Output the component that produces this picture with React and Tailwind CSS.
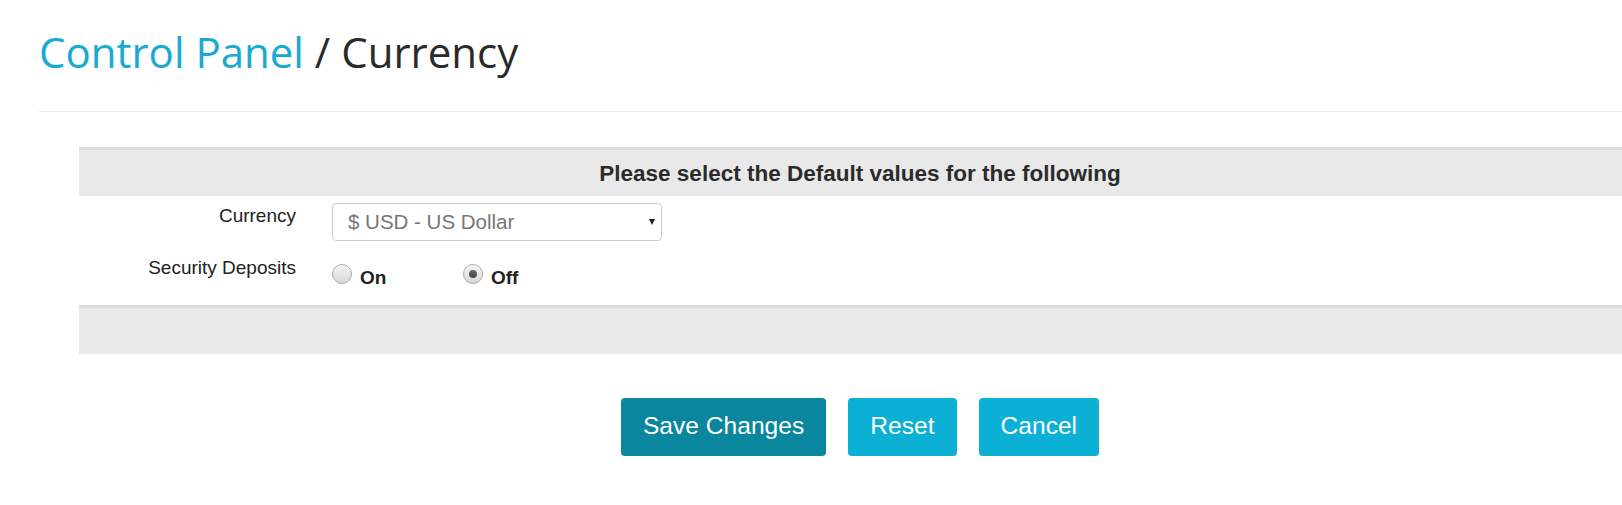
import { useState } from 'react';

const sans = { fontFamily: '"Liberation Sans", Arial, sans-serif' };

function Radio({ checked, label, onChange, className = '' }) {
  return (
    <label className={`flex cursor-pointer items-start ${className}`} onClick={onChange}>
      <span className="mt-[7px] flex h-[20px] w-[20px] items-center justify-center rounded-full border border-[#a9a9a9] bg-gradient-to-b from-[#f4f4f4] to-[#d9d9d9] shadow-[inset_0_1px_1px_rgba(255,255,255,0.8)]">
        {checked && <span className="h-[8px] w-[8px] rounded-full bg-gradient-to-b from-[#6b6b6b] to-[#444]" />}
      </span>
      <span className="ml-[8px] mt-[10px] text-[19px] font-bold leading-[1.2] text-[#222]">{label}</span>
    </label>
  );
}

export default function App() {
  const [deposits, setDeposits] = useState('off');
  const [currency, setCurrency] = useState('USD');

  return (
    <div className="w-[1622px] overflow-hidden bg-white" style={sans}>
      <div className="pl-[39px]">
        <h1
          className="mt-[29px] text-[42px] font-normal leading-[46px] text-[#2a2a2a]"
          style={{ fontFamily: '"Open Sans", sans-serif' }}
        >
          <span className="text-[#18abd2]">Control Panel</span> / Currency
        </h1>
        <div className="mt-[36px] border-t border-[#ebebeb]" />

        {/* bloque del formulario, mas ancho que la ventana */}
        <div className="ml-[40px] mt-[35px] w-[1562px]">
          <div className="border-t-[3px] border-[#dcdcdc] bg-[#e9e9e9]">
            <div className="flex h-[46px] items-center justify-center pt-[1px] text-[22.5px] font-bold text-[#2b2b2b]">
              Please select the Default values for the following
            </div>
          </div>

          <div className="grid grid-cols-[217px_1fr] gap-x-[36px] pt-[7px]">
            <div className="pt-[2px] text-right text-[19px] leading-[1.2] text-[#222]">Currency</div>
            <div className="relative h-[38px] w-[330px]">
              <select
                value={currency}
                onChange={(e) => setCurrency(e.target.value)}
                className="h-full w-full appearance-none rounded-[4px] border border-[#cccccc] bg-white pl-[15px] text-[20.5px] text-[#777]"
                style={sans}
              >
                <option value="USD">$ USD - US Dollar</option>
                <option value="EUR">€ EUR - Euro</option>
                <option value="GBP">£ GBP - British Pound</option>
              </select>
              <span className="pointer-events-none absolute right-[7px] top-[16px] h-0 w-0 border-x-[3px] border-t-[6px] border-x-transparent border-t-[#222]" />
            </div>

            <div className="mt-[16px] text-right text-[19px] leading-[1.2] text-[#222]">Security Deposits</div>
            <div className="mt-[16px] flex pb-[15px]">
              <Radio className="w-[131px]" label="On" checked={deposits === 'on'} onChange={() => setDeposits('on')} />
              <Radio label="Off" checked={deposits === 'off'} onChange={() => setDeposits('off')} />
            </div>
          </div>

          <div className="h-[49px] border-t-[3px] border-[#dcdcdc] bg-[#e9e9e9]" />

          <div className="mt-[44px] flex justify-center gap-[22px]">
            <button className="h-[58px] rounded-[4px] bg-[#0a869e] px-[22px] text-[24.6px] text-white">Save Changes</button>
            <button className="h-[58px] rounded-[4px] bg-[#0cb0d4] px-[22px] text-[24.6px] text-white">Reset</button>
            <button className="h-[58px] rounded-[4px] bg-[#0cb0d4] px-[22px] text-[24.6px] text-white">Cancel</button>
          </div>
        </div>
      </div>
      <div className="h-[50px]" />
    </div>
  );
}
